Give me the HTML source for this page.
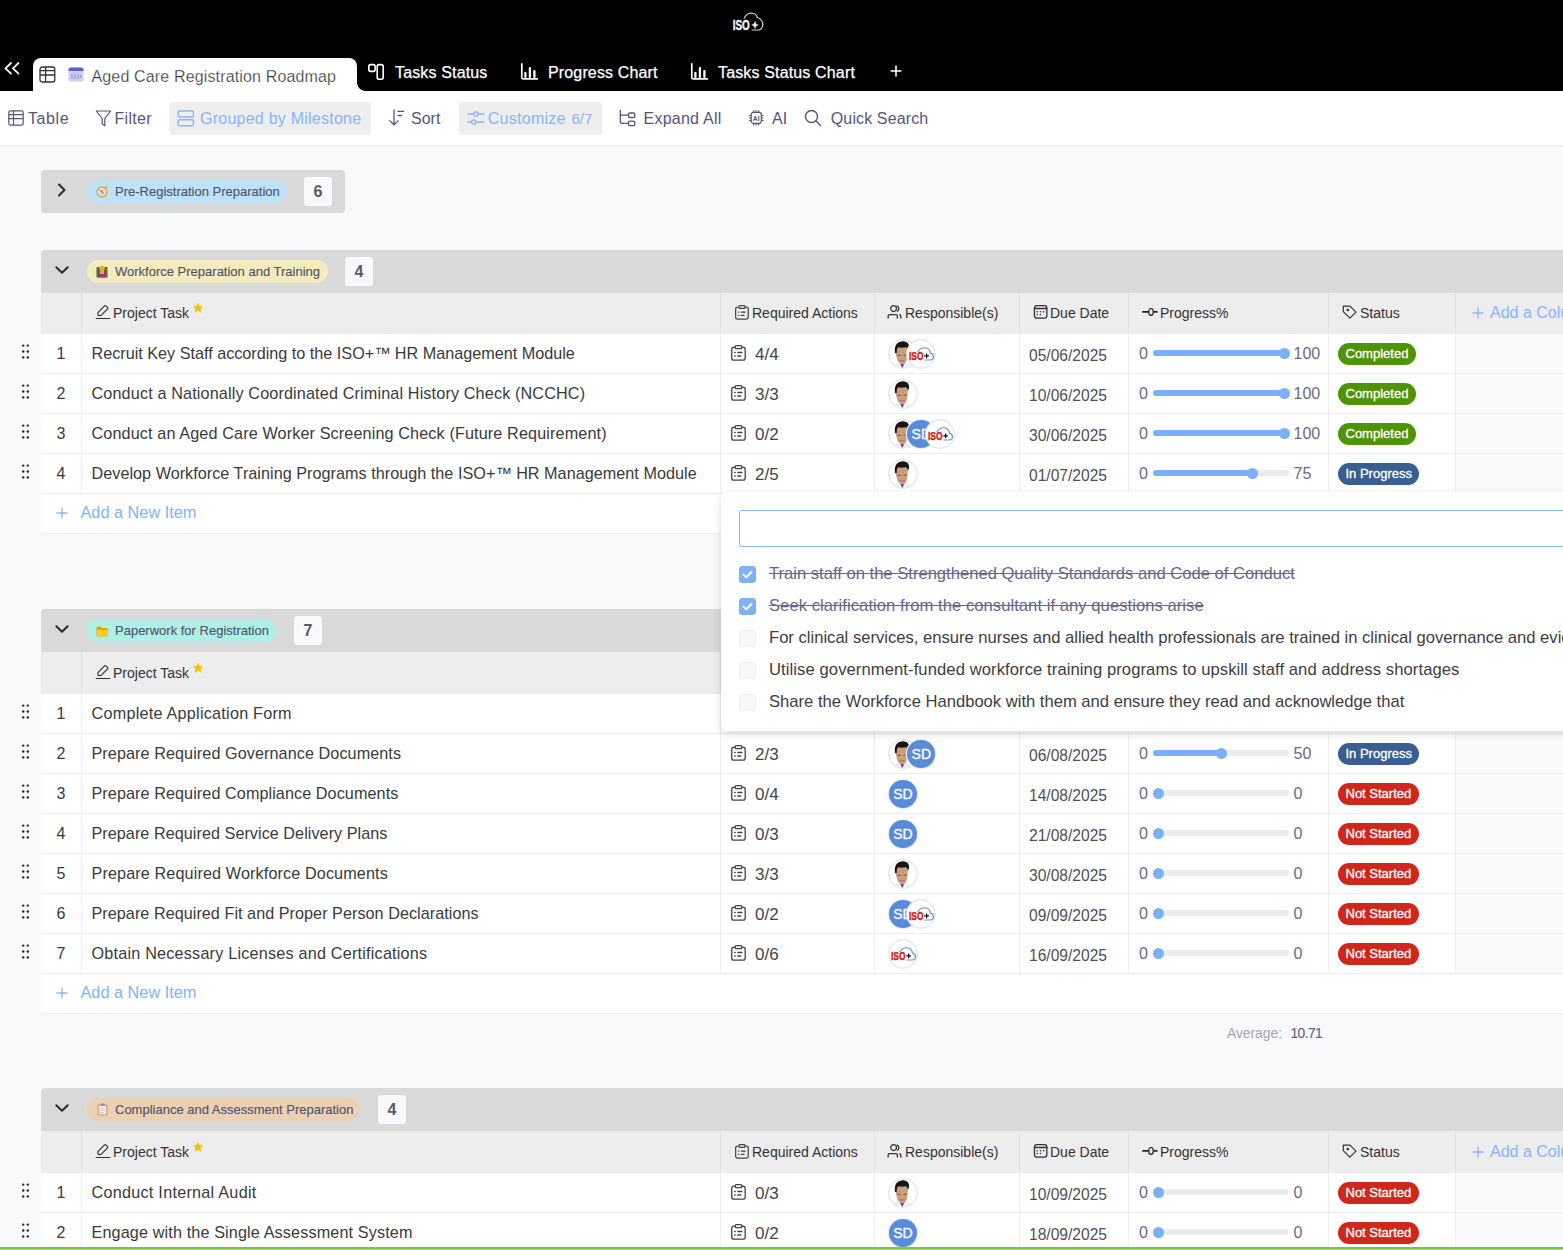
<!DOCTYPE html>
<html><head><meta charset="utf-8"><title>Aged Care Registration Roadmap</title>
<style>
*{box-sizing:border-box}
html,body{margin:0;padding:0}
body{width:1563px;height:1250px;overflow:hidden;position:relative;background:#f8f9fb;font-family:"Liberation Sans", sans-serif;color:#333}
div{position:absolute}
#topbar{left:0;top:0;width:1563px;height:91px;background:#000}
#acttab{left:33px;top:58px;width:324px;height:33px;background:#fff;border-radius:8px 8px 0 0}
#tabcorner{left:357px;top:83px;width:8px;height:8px;background:radial-gradient(circle at 100% 0,#000 7.5px,#fff 8px)}
.tabtxt{top:63px;font-size:16px;line-height:20px;color:#fff;white-space:nowrap;letter-spacing:0.15px;-webkit-text-stroke:0.25px #fff}
#toolbar{left:0;top:91px;width:1563px;height:55px;background:#fff;border-bottom:1px solid #eeeff2}
.tb{top:109px;font-size:16px;line-height:20px;color:#57557a;white-space:nowrap}
.tbbtn{top:102px;height:33px;background:#eeeeee;border-radius:4px}
.ghdr{left:41px;width:1522px;height:43px;background:#d9d9d9}
.pill{left:87px;height:23px;border-radius:12px;font-size:13px;line-height:23px;color:#545468;white-space:nowrap;-webkit-text-stroke:0.15px #545468}
.pill span{position:absolute;left:28px;top:0}
.count{width:28px;height:29px;background:#f9f9fb;border-radius:3px;font-size:16px;font-weight:700;line-height:29px;text-align:center;color:#555870}
.colhdr{left:41px;width:1522px;height:40px;background-color:#ededed;border-bottom:1px solid #ebebeb;
  background-image:linear-gradient(#dcdcdc,#dcdcdc),linear-gradient(#e0e0e0,#e0e0e0),linear-gradient(#e0e0e0,#e0e0e0),linear-gradient(#e0e0e0,#e0e0e0),linear-gradient(#e0e0e0,#e0e0e0),linear-gradient(#e0e0e0,#e0e0e0),linear-gradient(#e0e0e0,#e0e0e0);
  background-size:1px 100%,1px 100%,1px 100%,1px 100%,1px 100%,1px 100%,1px 100%;
  background-position:40px 0,679px 0,833px 0,978px 0,1087px 0,1287px 0,1414px 0;background-repeat:no-repeat}
.hl{font-size:14px;line-height:40px;color:#333;white-space:nowrap}
.addcol{left:1490px;font-size:16px;line-height:40px;color:#8ab4f8;white-space:nowrap}
.rowbg{left:41px;width:1522px;height:40px;background:#fff;border-bottom:1px solid #eeeeee;
  background-image:linear-gradient(#eee,#eee),linear-gradient(#eee,#eee),linear-gradient(#eee,#eee),linear-gradient(#eee,#eee),linear-gradient(#eee,#eee),linear-gradient(#eee,#eee),linear-gradient(#eee,#eee),linear-gradient(#f9fafb,#f9fafb);
  background-size:1px 100%,1px 100%,1px 100%,1px 100%,1px 100%,1px 100%,1px 100%,110px 100%;
  background-position:40px 0,679px 0,833px 0,978px 0,1087px 0,1287px 0,1414px 0,1415px 0;background-repeat:no-repeat}
.num{left:41px;width:40px;text-align:center;font-size:16px;line-height:39px;color:#3a3a3a}
.task{left:91.5px;font-size:16.2px;line-height:38px;color:#3a3a3a;white-space:nowrap}
.ra{left:755px;font-size:17px;line-height:41px;color:#444}
.date{left:1029px;font-size:15.6px;line-height:44px;color:#505050}
.p0{left:1139px;font-size:16px;line-height:40px;color:#6c6a82}
.pv{left:1293.5px;font-size:16px;line-height:40px;color:#6c6a82}
.track{left:1153px;width:136px;height:6px;border-radius:3px;background:#ececec}
.fill{left:1153px;height:6px;border-radius:3px;background:#79b0f7}
.thumb{width:11px;height:11px;border-radius:50%;background:#79b0f7}
.badge{left:1338px;height:22px;border-radius:11px;padding:0 7.5px;font-size:13px;font-weight:400;line-height:22px;color:#fff;white-space:nowrap;-webkit-text-stroke:0.3px #fff}
.addrow{left:41px;width:1522px;height:40px;background:#fff;border-bottom:1px solid #eeeeee;border-radius:0 0 0 4px}
.addrow .plus{position:absolute;left:14px;top:0;font-size:18px;line-height:38px;color:#8ab4f8}
.addrow .addtxt{position:absolute;left:39.5px;top:0;font-size:16.3px;line-height:37.5px;color:#82b3f7}
.avg{left:1227px;top:1025px;font-size:13.8px;line-height:18px;white-space:nowrap}
#popup{left:721px;top:492px;width:900px;height:239px;background:#fff;border-radius:6px;box-shadow:0 3px 8px rgba(0,0,0,0.15)}
#popinput{left:739px;top:510px;width:900px;height:37px;border:1px solid #8ab8f5;border-radius:3px;background:#fff}
.cb{left:739px;width:17px;height:17px;border-radius:3px;background:#f7f8fa;border:1px solid #eceef2}
.cb.on{background:#7cb2f8;border-color:#7cb2f8}
.cb svg{position:absolute;left:-1px;top:-1px}
.pit{left:769px;font-size:16.6px;line-height:20px;color:#3d3d3d;white-space:nowrap}
.pit.strike{color:#686686;text-decoration:line-through}
#greenline{left:0;top:1247px;width:1563px;height:2px;background:#86bf3a}
#bottomstrip{left:0;top:1249px;width:1563px;height:1px;background:#cdb9c5}
</style></head>
<body>

<div id="topbar"></div>
<svg style="position:absolute;left:731px;top:11px" width="34" height="22" viewBox="0 0 34 22"><text x="1.8" y="19" font-family="Liberation Sans" font-weight="700" font-size="14.5" fill="#f2f2f2" stroke="#f2f2f2" stroke-width="0.5" textLength="17" lengthAdjust="spacingAndGlyphs">ISO</text><path d="M13 7.5Q15.5 2 20.5 2Q25 2.2 26.3 6.5Q31.8 8.5 31.8 13.5Q31.5 19 26.5 19H20.5" fill="none" stroke="#d8d8d8" stroke-width="1.2"/><path d="M24 10.5Q24.3 13.7 27.2 14Q24.3 14.3 24 17.5Q23.7 14.3 20.8 14Q23.7 13.7 24 10.5Z" fill="#fff" stroke="#fff" stroke-width="0.6"/></svg>
<svg style="position:absolute;left:3px;top:61px" width="18" height="15" viewBox="0 0 18 15" fill="none" stroke="#fff" stroke-width="1.8" stroke-linecap="round" stroke-linejoin="round"><path d="M8 2L2.5 7.3L8 12.6M15.5 2L10 7.3L15.5 12.6"/></svg>
<div id="acttab"></div>
<div id="tabcorner"></div>
<svg style="position:absolute;left:39px;top:66px" width="17" height="17" viewBox="0 0 17 17" fill="none" stroke="#333" stroke-width="1.3"><rect x="1" y="1" width="14.8" height="15" rx="2.3"/><path d="M1 4.7H15.8M1 9H15.8M6.6 1V16"/></svg>
<svg style="position:absolute;left:68px;top:66px" width="16" height="16" viewBox="0 0 16 16"><rect x="0.5" y="1.5" width="15" height="14" rx="2.5" fill="#cfcdf0"/><path d="M0.5 4Q0.5 1.5 3 1.5H13Q15.5 1.5 15.5 4V5H0.5Z" fill="#5c5fd6"/><path d="M4 8V13M7 8V13M10 8V13" stroke="#8a8ad0" stroke-width="1"/><path d="M12 9L13 10.5L12 12" stroke="#5c7ce0" stroke-width="0.9" fill="none"/></svg>
<div class="tabtxt" style="left:91.5px;color:#333;top:66.5px">Aged Care Registration Roadmap</div>
<svg style="position:absolute;left:367px;top:63px" width="18" height="18" viewBox="0 0 18 18" fill="none" stroke="#fff" stroke-width="1.6"><rect x="1.8" y="1.6" width="6.3" height="6.8" rx="1.8"/><rect x="10.2" y="1.6" width="6" height="14.6" rx="2"/></svg>
<div class="tabtxt" style="left:395px">Tasks Status</div>
<svg style="position:absolute;left:520px;top:63px" width="19" height="18" viewBox="0 0 19 18" fill="none" stroke="#fff" stroke-linecap="round"><path d="M1.8 0.9V14.4Q1.8 15.9 3.3 15.9H17.3" stroke-width="1.7"/><path d="M5.4 9.8V13.9M9.9 5.2V13.9M14.4 8.1V13.9" stroke-width="2.3"/></svg>
<div class="tabtxt" style="left:548px">Progress Chart</div>
<svg style="position:absolute;left:690px;top:63px" width="19" height="18" viewBox="0 0 19 18" fill="none" stroke="#fff" stroke-linecap="round"><path d="M1.8 0.9V14.4Q1.8 15.9 3.3 15.9H17.3" stroke-width="1.7"/><path d="M5.4 9.8V13.9M9.9 5.2V13.9M14.4 8.1V13.9" stroke-width="2.3"/></svg>
<div class="tabtxt" style="left:718px">Tasks Status Chart</div>
<svg style="position:absolute;left:889px;top:64px" width="14" height="14" viewBox="0 0 14 14" stroke="#fff" stroke-width="1.6"><path d="M7 1.5V12.5M1.5 7H12.5"/></svg>

<div id="toolbar"></div>
<svg style="position:absolute;left:8px;top:110px" width="16" height="16" viewBox="0 0 16 16" fill="none" stroke="#57557a" stroke-width="1.2"><rect x="0.8" y="0.8" width="14.4" height="14.4" rx="1.8"/><path d="M0.8 4.6H15.2M0.8 8.6H15.2M5.5 0.8V15.2"/></svg>
<div class="tb" style="left:28px;letter-spacing:0.6px">Table</div>
<svg style="position:absolute;left:94.5px;top:110px" width="17" height="17" viewBox="0 0 16 17" fill="none" stroke="#57557a" stroke-width="1.2" stroke-linejoin="round"><path d="M0.8 1H15.2L9.3 8.5V15.8L6.7 13.8V8.5Z"/></svg>
<div class="tb" style="left:114.4px;letter-spacing:0.35px">Filter</div>
<div class="tbbtn" style="left:169px;width:202px"></div>
<svg style="position:absolute;left:177px;top:110px" width="18" height="17" viewBox="0 0 18 17" fill="none" stroke="#8ab4f8" stroke-width="1.4"><rect x="1" y="1" width="15.5" height="6" rx="1.8"/><rect x="1" y="9.8" width="15.5" height="6" rx="1.8"/></svg>
<div class="tb" style="left:200px;color:#8ab4f8;letter-spacing:0.24px">Grouped by Milestone</div>
<svg style="position:absolute;left:388px;top:109px" width="17" height="18" viewBox="0 0 17 18" fill="none" stroke="#57557a" stroke-width="1.3" stroke-linecap="round" stroke-linejoin="round"><path d="M6 1V15.6M1.7 11.6L6 15.8L10.3 11.6M10 2.4H15.6M10 6.5H13.4"/></svg>
<div class="tb" style="left:411px">Sort</div>
<div class="tbbtn" style="left:459px;width:143px"></div>
<svg style="position:absolute;left:467px;top:109px" width="18" height="18" viewBox="0 0 18 18" fill="none" stroke="#8ab4f8" stroke-width="1.3" stroke-linecap="round"><path d="M1 5H6.5M11 5H17M1 13H4.5M9 13H17"/><circle cx="8.8" cy="5" r="2.2"/><circle cx="6.8" cy="13" r="2.2"/></svg>
<div class="tb" style="left:487.7px;color:#8ab4f8;letter-spacing:0.28px">Customize</div>
<div class="tb" style="left:571.5px;color:#8ab4f8;font-size:15px;top:108.5px">6/7</div>
<svg style="position:absolute;left:618px;top:109px" width="18" height="18" viewBox="0 0 18 18" fill="none" stroke="#57557a" stroke-width="1.3"><path d="M2.3 1V12.3Q2.3 14.4 4.4 14.4H10.5M2.3 6.2H10.5"/><rect x="10.5" y="4" width="6.3" height="4.5" rx="1.3"/><rect x="10.5" y="12.2" width="6.3" height="4.5" rx="1.3"/></svg>
<div class="tb" style="left:643.5px;letter-spacing:0.25px">Expand All</div>
<svg style="position:absolute;left:747px;top:109px" width="18" height="18" viewBox="0 0 18 18" fill="none" stroke="#57557a" stroke-width="1.2"><rect x="4.2" y="3.3" width="10.1" height="11" rx="2.2"/><path d="M6.7 1.2V3.3M9.2 1.2V3.3M11.7 1.2V3.3M6.7 14.3V16.4M9.2 14.3V16.4M11.7 14.3V16.4M2 6.5H4.2M2 9H4.2M2 11.5H4.2M14.3 6.5H16.5M14.3 9H16.5M14.3 11.5H16.5"/><text x="9.25" y="11.8" text-anchor="middle" font-family="Liberation Sans" font-size="6.8" fill="#57557a" stroke="none" font-weight="700">AI</text></svg>
<div class="tb" style="left:772px">AI</div>
<svg style="position:absolute;left:804px;top:109px" width="18" height="18" viewBox="0 0 18 18" fill="none" stroke="#57557a" stroke-width="1.4" stroke-linecap="round"><circle cx="7.5" cy="7.5" r="6"/><path d="M12 12L16.5 16.5"/></svg>
<div class="tb" style="left:830.8px;letter-spacing:0.12px">Quick Search</div>
<div class="ghdr" style="top:170px;width:304px;border-radius:4px"></div><svg style="position:absolute;left:56px;top:182px" width="12" height="16" viewBox="0 0 12 16" fill="none" stroke="#2a2a2a" stroke-width="2" stroke-linecap="round" stroke-linejoin="round"><path d="M3 2.5L8.5 8L3 13.5"/></svg><div class="pill" style="top:180px;width:199px;background:#bde3fb"><svg width="13" height="13" viewBox="0 0 13 13" style="position:absolute;left:9px;top:5px"><circle cx="6" cy="7" r="5" fill="#e6d6ee" stroke="#dcae2a" stroke-width="1.4"/><path d="M3.8 4.8L6.5 6.6L8.2 9.2L5.5 7.4Z" fill="#8a6a9a"/><path d="M3.8 4.8L6.5 6.6L5.5 7.4Z" fill="#e04a8a"/><circle cx="10.3" cy="2.2" r="1.3" fill="#e8b420"/></svg><span>Pre-Registration Preparation</span></div><div class="count" style="top:177px;left:304px">6</div><div class="ghdr" style="top:250px;border-radius:4px 0 0 0"></div><svg style="position:absolute;left:54px;top:263.5px" width="16" height="12" viewBox="0 0 16 12" fill="none" stroke="#2a2a2a" stroke-width="2" stroke-linecap="round" stroke-linejoin="round"><path d="M2.3 3.2L8 8.8L13.7 3.2"/></svg><div class="pill" style="top:260px;width:241px;background:#f4ecbc"><svg width="12" height="13" viewBox="0 0 12 13" style="position:absolute;left:9px;top:5px"><rect x="0.5" y="2" width="11" height="10.5" fill="#3c7a3a"/><rect x="3" y="1" width="6" height="4" rx="2" fill="#e6b020"/><rect x="2.5" y="5" width="7" height="7.5" fill="#b02a8a"/><rect x="4" y="5" width="4" height="4" fill="#e6b020"/></svg><span>Workforce Preparation and Training</span></div><div class="count" style="top:257px;left:345px">4</div><div class="colhdr" style="top:293px;height:41px"></div><svg style="position:absolute;left:95px;top:304.0px" width="16" height="16" viewBox="0 0 16 16" fill="none" stroke="#333" stroke-width="1.2" stroke-linecap="round" stroke-linejoin="round"><path d="M3.2 11.4L2.9 9.2Q2.8 8.6 3.3 8.1L9.6 1.9Q10.2 1.3 10.8 1.9L12.6 3.7Q13.2 4.3 12.6 4.9L6.3 11.1Q5.8 11.6 5.2 11.6Z"/><path d="M1.3 14.5H14.8"/></svg><div class="hl" style="top:293.0px;left:113px">Project Task</div><svg style="position:absolute;left:193px;top:303.0px" width="10" height="10" viewBox="0 0 10 10"><path d="M5 0.3L6.4 3.3L9.7 3.6L7.2 5.8L7.9 9.2L5 7.5L2.1 9.2L2.8 5.8L0.3 3.6L3.6 3.3Z" fill="#f2c200" stroke="#f2c200" stroke-width="0.6" stroke-linejoin="round"/></svg><svg style="position:absolute;left:735px;top:305.0px" width="14" height="15" viewBox="0 0 15 16" fill="none" stroke="#444" stroke-width="1.3" stroke-linecap="round"><path d="M4.2 2.1H3Q0.7 2.1 0.7 4.4V12.9Q0.7 15.2 3 15.2H11.9Q14.2 15.2 14.2 12.9V4.4Q14.2 2.1 11.9 2.1H10.8"/><rect x="4.2" y="0.65" width="6.6" height="3" rx="1"/><path d="M3.7 7.5H4.2M6.8 7.5H10.9M3.7 11H4.2M6.8 11H9.7"/></svg><div class="hl" style="top:293.0px;left:752px">Required Actions</div><svg style="position:absolute;left:887px;top:305.0px" width="16" height="16" viewBox="0 0 16 16" fill="none" stroke="#333" stroke-width="1.3"><circle cx="6.6" cy="3.6" r="2.9"/><path d="M9.7 0.8A2.9 2.9 0 0 1 9.7 6.4"/><path d="M1.15 13.6V11Q1.15 9.6 2.6 9.6H8.9Q10.35 9.6 10.35 11V13.6"/><path d="M12.2 9.7Q13.85 10 13.85 11.5V13.6"/></svg><div class="hl" style="top:293.0px;left:905px">Responsible(s)</div><svg style="position:absolute;left:1032.5px;top:304.0px" width="16" height="16" viewBox="0 0 16 16" fill="none" stroke="#333" stroke-width="1.3" stroke-linecap="round"><rect x="1.45" y="1.65" width="12.4" height="12.5" rx="2.3"/><path d="M1.45 4.5H13.85"/><path d="M4.1 7.7H4.2M7.4 7.7H7.5M10.5 7.7H10.6M4.1 10.5H4.2M7.4 10.5H7.5" stroke-width="1.5"/></svg><div class="hl" style="top:293.0px;left:1050px">Due Date</div><svg style="position:absolute;left:1142px;top:305.0px" width="16" height="16" viewBox="0 0 16 16" fill="none" stroke="#222"><path d="M1 6.9H14.8" stroke-width="1.8" stroke-linecap="round"/><ellipse cx="9" cy="6.9" rx="2.3" ry="3.4" fill="#ededed" stroke-width="1.2"/></svg><div class="hl" style="top:293.0px;left:1160px">Progress%</div><svg style="position:absolute;left:1342px;top:305.0px" width="16" height="16" viewBox="0 0 16 16" fill="none" stroke="#333" stroke-width="1.2" stroke-linejoin="round"><path d="M1.3 1.1H7.9L14 7.1L7.9 13.2L1.3 6.6Z"/><circle cx="5.8" cy="5" r="0.7" fill="#333"/></svg><div class="hl" style="top:293.0px;left:1360px">Status</div><svg style="position:absolute;left:1472px;top:307.0px" width="12" height="12" viewBox="0 0 12 12" stroke="#8ab4f8" stroke-width="1.3"><path d="M6 0.5V11.5M0.5 6H11.5"/></svg><div class="addcol" style="top:293.0px">Add a Column</div><div class="rowbg" style="top:334px"></div><div class="num" style="top:334px">1</div><div class="task" style="top:334px;letter-spacing:0px">Recruit Key Staff according to the ISO+™ HR Management Module</div><svg style="position:absolute;left:731px;top:344.5px" width="15" height="16" viewBox="0 0 15 16" fill="none" stroke="#444" stroke-width="1.3" stroke-linecap="round"><path d="M4.2 2.1H3Q0.7 2.1 0.7 4.4V12.9Q0.7 15.2 3 15.2H11.9Q14.2 15.2 14.2 12.9V4.4Q14.2 2.1 11.9 2.1H10.8"/><rect x="4.2" y="0.65" width="6.6" height="3" rx="1"/><path d="M3.7 7.5H4.2M6.8 7.5H10.9M3.7 11H4.2M6.8 11H9.7"/></svg><div class="ra" style="top:334px">4/4</div><svg style="position:absolute;left:888.0px;top:339px" width="30" height="30" viewBox="0 0 30 30"><defs><clipPath id="cpm889.0_340"><circle cx="15" cy="15" r="14"/></clipPath></defs><circle cx="15" cy="15" r="14.2" fill="#fff" stroke="#e8e8e8" stroke-width="1.5"/><g clip-path="url(#cpm889.0_340)"><path d="M5 30Q6 24.5 14 23.5Q22 24.5 23 30Z" fill="#eef0fa" stroke="#c8cce8" stroke-width="0.6"/><path d="M12.3 25L14.2 29L16.2 25Z" fill="#4a3aa0"/><path d="M8 8Q7.6 19 10 22.5Q12 25.5 14.2 25.5Q16.8 25.5 18.5 22Q20 18.5 19.8 8Z" fill="#c99f7c"/><path d="M9.5 16.5Q11 15.5 12.5 16.5M15.5 16.5Q17 15.5 18.5 16.5" stroke="#5a3a2a" stroke-width="0.8" fill="none"/><path d="M11.5 21.5Q14 22.8 16.5 21.5" stroke="#8a5a40" stroke-width="0.7" fill="none"/><path d="M7 14Q6 8.5 8.5 5Q11 2 15.5 2.3Q20 2.6 21 6.5Q21.5 9 20 12Q19.5 9 18 8.3Q13 9 10 8.2Q8.6 10 8.6 14.5Z" fill="#161616"/></g></svg><svg style="position:absolute;left:906.3px;top:339px" width="30" height="30" viewBox="0 0 30 30"><circle cx="15" cy="15" r="14.2" fill="#fff" stroke="#e8e8e8" stroke-width="1.5"/><path d="M11.5 13.3Q14 8.6 18.8 8.7Q23.4 9 24.6 14Q27.6 15.3 27.5 18Q27.2 21 24.5 21H18.5" fill="none" stroke="#5b93e0" stroke-width="1.1"/><text x="3" y="21.4" font-family="Liberation Sans" font-weight="700" font-size="11" fill="#d01c1c" stroke="#d01c1c" stroke-width="0.45" textLength="14.5" lengthAdjust="spacingAndGlyphs">ISO</text><path d="M18.3 16.9H23M20.65 14.5V19.3" stroke="#111" stroke-width="1.3"/></svg><div class="date" style="top:334px">05/06/2025</div><div class="p0" style="top:334px">0</div><div class="track" style="top:350px"></div><div class="fill" style="top:350px;width:131.0px"></div><div class="thumb" style="top:347.5px;left:1278.5px"></div><div class="pv" style="top:334px">100</div><div class="badge" style="top:343px;background:#4f9406">Completed</div><div class="rowbg" style="top:374px"></div><div class="num" style="top:374px">2</div><div class="task" style="top:374px;letter-spacing:0.14px">Conduct a Nationally Coordinated Criminal History Check (NCCHC)</div><svg style="position:absolute;left:731px;top:384.5px" width="15" height="16" viewBox="0 0 15 16" fill="none" stroke="#444" stroke-width="1.3" stroke-linecap="round"><path d="M4.2 2.1H3Q0.7 2.1 0.7 4.4V12.9Q0.7 15.2 3 15.2H11.9Q14.2 15.2 14.2 12.9V4.4Q14.2 2.1 11.9 2.1H10.8"/><rect x="4.2" y="0.65" width="6.6" height="3" rx="1"/><path d="M3.7 7.5H4.2M6.8 7.5H10.9M3.7 11H4.2M6.8 11H9.7"/></svg><div class="ra" style="top:374px">3/3</div><svg style="position:absolute;left:888.0px;top:379px" width="30" height="30" viewBox="0 0 30 30"><defs><clipPath id="cpm889.0_380"><circle cx="15" cy="15" r="14"/></clipPath></defs><circle cx="15" cy="15" r="14.2" fill="#fff" stroke="#e8e8e8" stroke-width="1.5"/><g clip-path="url(#cpm889.0_380)"><path d="M5 30Q6 24.5 14 23.5Q22 24.5 23 30Z" fill="#eef0fa" stroke="#c8cce8" stroke-width="0.6"/><path d="M12.3 25L14.2 29L16.2 25Z" fill="#4a3aa0"/><path d="M8 8Q7.6 19 10 22.5Q12 25.5 14.2 25.5Q16.8 25.5 18.5 22Q20 18.5 19.8 8Z" fill="#c99f7c"/><path d="M9.5 16.5Q11 15.5 12.5 16.5M15.5 16.5Q17 15.5 18.5 16.5" stroke="#5a3a2a" stroke-width="0.8" fill="none"/><path d="M11.5 21.5Q14 22.8 16.5 21.5" stroke="#8a5a40" stroke-width="0.7" fill="none"/><path d="M7 14Q6 8.5 8.5 5Q11 2 15.5 2.3Q20 2.6 21 6.5Q21.5 9 20 12Q19.5 9 18 8.3Q13 9 10 8.2Q8.6 10 8.6 14.5Z" fill="#161616"/></g></svg><div class="date" style="top:374px">10/06/2025</div><div class="p0" style="top:374px">0</div><div class="track" style="top:390px"></div><div class="fill" style="top:390px;width:131.0px"></div><div class="thumb" style="top:387.5px;left:1278.5px"></div><div class="pv" style="top:374px">100</div><div class="badge" style="top:383px;background:#4f9406">Completed</div><div class="rowbg" style="top:414px"></div><div class="num" style="top:414px">3</div><div class="task" style="top:414px;letter-spacing:0.125px">Conduct an Aged Care Worker Screening Check (Future Requirement)</div><svg style="position:absolute;left:731px;top:424.5px" width="15" height="16" viewBox="0 0 15 16" fill="none" stroke="#444" stroke-width="1.3" stroke-linecap="round"><path d="M4.2 2.1H3Q0.7 2.1 0.7 4.4V12.9Q0.7 15.2 3 15.2H11.9Q14.2 15.2 14.2 12.9V4.4Q14.2 2.1 11.9 2.1H10.8"/><rect x="4.2" y="0.65" width="6.6" height="3" rx="1"/><path d="M3.7 7.5H4.2M6.8 7.5H10.9M3.7 11H4.2M6.8 11H9.7"/></svg><div class="ra" style="top:414px">0/2</div><svg style="position:absolute;left:888.0px;top:419px" width="30" height="30" viewBox="0 0 30 30"><defs><clipPath id="cpm889.0_420"><circle cx="15" cy="15" r="14"/></clipPath></defs><circle cx="15" cy="15" r="14.2" fill="#fff" stroke="#e8e8e8" stroke-width="1.5"/><g clip-path="url(#cpm889.0_420)"><path d="M5 30Q6 24.5 14 23.5Q22 24.5 23 30Z" fill="#eef0fa" stroke="#c8cce8" stroke-width="0.6"/><path d="M12.3 25L14.2 29L16.2 25Z" fill="#4a3aa0"/><path d="M8 8Q7.6 19 10 22.5Q12 25.5 14.2 25.5Q16.8 25.5 18.5 22Q20 18.5 19.8 8Z" fill="#c99f7c"/><path d="M9.5 16.5Q11 15.5 12.5 16.5M15.5 16.5Q17 15.5 18.5 16.5" stroke="#5a3a2a" stroke-width="0.8" fill="none"/><path d="M11.5 21.5Q14 22.8 16.5 21.5" stroke="#8a5a40" stroke-width="0.7" fill="none"/><path d="M7 14Q6 8.5 8.5 5Q11 2 15.5 2.3Q20 2.6 21 6.5Q21.5 9 20 12Q19.5 9 18 8.3Q13 9 10 8.2Q8.6 10 8.6 14.5Z" fill="#161616"/></g></svg><div style="position:absolute;left:907.3px;top:420px;width:28px;height:28px;border-radius:50%;background:#598bdb;box-shadow:0 0 0 1.3px #ececec;color:#fff;font-size:14px;font-weight:400;line-height:28px;text-align:center;-webkit-text-stroke:0.3px #fff">SD</div><svg style="position:absolute;left:924.6px;top:419px" width="30" height="30" viewBox="0 0 30 30"><circle cx="15" cy="15" r="14.2" fill="#fff" stroke="#e8e8e8" stroke-width="1.5"/><path d="M11.5 13.3Q14 8.6 18.8 8.7Q23.4 9 24.6 14Q27.6 15.3 27.5 18Q27.2 21 24.5 21H18.5" fill="none" stroke="#5b93e0" stroke-width="1.1"/><text x="3" y="21.4" font-family="Liberation Sans" font-weight="700" font-size="11" fill="#d01c1c" stroke="#d01c1c" stroke-width="0.45" textLength="14.5" lengthAdjust="spacingAndGlyphs">ISO</text><path d="M18.3 16.9H23M20.65 14.5V19.3" stroke="#111" stroke-width="1.3"/></svg><div class="date" style="top:414px">30/06/2025</div><div class="p0" style="top:414px">0</div><div class="track" style="top:430px"></div><div class="fill" style="top:430px;width:131.0px"></div><div class="thumb" style="top:427.5px;left:1278.5px"></div><div class="pv" style="top:414px">100</div><div class="badge" style="top:423px;background:#4f9406">Completed</div><div class="rowbg" style="top:454px"></div><div class="num" style="top:454px">4</div><div class="task" style="top:454px;letter-spacing:0.03px">Develop Workforce Training Programs through the ISO+™ HR Management Module</div><svg style="position:absolute;left:731px;top:464.5px" width="15" height="16" viewBox="0 0 15 16" fill="none" stroke="#444" stroke-width="1.3" stroke-linecap="round"><path d="M4.2 2.1H3Q0.7 2.1 0.7 4.4V12.9Q0.7 15.2 3 15.2H11.9Q14.2 15.2 14.2 12.9V4.4Q14.2 2.1 11.9 2.1H10.8"/><rect x="4.2" y="0.65" width="6.6" height="3" rx="1"/><path d="M3.7 7.5H4.2M6.8 7.5H10.9M3.7 11H4.2M6.8 11H9.7"/></svg><div class="ra" style="top:454px">2/5</div><svg style="position:absolute;left:888.0px;top:459px" width="30" height="30" viewBox="0 0 30 30"><defs><clipPath id="cpm889.0_460"><circle cx="15" cy="15" r="14"/></clipPath></defs><circle cx="15" cy="15" r="14.2" fill="#fff" stroke="#e8e8e8" stroke-width="1.5"/><g clip-path="url(#cpm889.0_460)"><path d="M5 30Q6 24.5 14 23.5Q22 24.5 23 30Z" fill="#eef0fa" stroke="#c8cce8" stroke-width="0.6"/><path d="M12.3 25L14.2 29L16.2 25Z" fill="#4a3aa0"/><path d="M8 8Q7.6 19 10 22.5Q12 25.5 14.2 25.5Q16.8 25.5 18.5 22Q20 18.5 19.8 8Z" fill="#c99f7c"/><path d="M9.5 16.5Q11 15.5 12.5 16.5M15.5 16.5Q17 15.5 18.5 16.5" stroke="#5a3a2a" stroke-width="0.8" fill="none"/><path d="M11.5 21.5Q14 22.8 16.5 21.5" stroke="#8a5a40" stroke-width="0.7" fill="none"/><path d="M7 14Q6 8.5 8.5 5Q11 2 15.5 2.3Q20 2.6 21 6.5Q21.5 9 20 12Q19.5 9 18 8.3Q13 9 10 8.2Q8.6 10 8.6 14.5Z" fill="#161616"/></g></svg><div class="date" style="top:454px">01/07/2025</div><div class="p0" style="top:454px">0</div><div class="track" style="top:470px"></div><div class="fill" style="top:470px;width:99.5px"></div><div class="thumb" style="top:467.5px;left:1247.0px"></div><div class="pv" style="top:454px">75</div><div class="badge" style="top:463px;background:#385f8f">In Progress</div><div class="addrow" style="top:494px"><svg style="position:absolute;left:15px;top:12.5px" width="12" height="12" viewBox="0 0 12 12" stroke="#8ab4f8" stroke-width="1.3"><path d="M6 0.5V11.5M0.5 6H11.5"/></svg><span class="addtxt">Add a New Item</span></div><div class="ghdr" style="top:609px;border-radius:4px 0 0 0"></div><svg style="position:absolute;left:54px;top:622.5px" width="16" height="12" viewBox="0 0 16 12" fill="none" stroke="#2a2a2a" stroke-width="2" stroke-linecap="round" stroke-linejoin="round"><path d="M2.3 3.2L8 8.8L13.7 3.2"/></svg><div class="pill" style="top:619px;width:189px;background:#aef0e8"><svg width="13" height="11" viewBox="0 0 13 11" style="position:absolute;left:9px;top:7px"><path d="M0.5 1.5Q0.5 0.5 1.5 0.5H4.5L6 2H11Q12 2 12 3V9.5Q12 10.5 11 10.5H1.5Q0.5 10.5 0.5 9.5Z" fill="#e5a50a"/><path d="M1.5 4H12.5L11.5 10.5H0.5Z" fill="#f8cd2a"/></svg><span>Paperwork for Registration</span></div><div class="count" style="top:616px;left:294px">7</div><div class="colhdr" style="top:652px;height:42px"></div><svg style="position:absolute;left:95px;top:663.5px" width="16" height="16" viewBox="0 0 16 16" fill="none" stroke="#333" stroke-width="1.2" stroke-linecap="round" stroke-linejoin="round"><path d="M3.2 11.4L2.9 9.2Q2.8 8.6 3.3 8.1L9.6 1.9Q10.2 1.3 10.8 1.9L12.6 3.7Q13.2 4.3 12.6 4.9L6.3 11.1Q5.8 11.6 5.2 11.6Z"/><path d="M1.3 14.5H14.8"/></svg><div class="hl" style="top:652.5px;left:113px">Project Task</div><svg style="position:absolute;left:193px;top:662.5px" width="10" height="10" viewBox="0 0 10 10"><path d="M5 0.3L6.4 3.3L9.7 3.6L7.2 5.8L7.9 9.2L5 7.5L2.1 9.2L2.8 5.8L0.3 3.6L3.6 3.3Z" fill="#f2c200" stroke="#f2c200" stroke-width="0.6" stroke-linejoin="round"/></svg><svg style="position:absolute;left:735px;top:664.5px" width="14" height="15" viewBox="0 0 15 16" fill="none" stroke="#444" stroke-width="1.3" stroke-linecap="round"><path d="M4.2 2.1H3Q0.7 2.1 0.7 4.4V12.9Q0.7 15.2 3 15.2H11.9Q14.2 15.2 14.2 12.9V4.4Q14.2 2.1 11.9 2.1H10.8"/><rect x="4.2" y="0.65" width="6.6" height="3" rx="1"/><path d="M3.7 7.5H4.2M6.8 7.5H10.9M3.7 11H4.2M6.8 11H9.7"/></svg><div class="hl" style="top:652.5px;left:752px">Required Actions</div><svg style="position:absolute;left:887px;top:664.5px" width="16" height="16" viewBox="0 0 16 16" fill="none" stroke="#333" stroke-width="1.3"><circle cx="6.6" cy="3.6" r="2.9"/><path d="M9.7 0.8A2.9 2.9 0 0 1 9.7 6.4"/><path d="M1.15 13.6V11Q1.15 9.6 2.6 9.6H8.9Q10.35 9.6 10.35 11V13.6"/><path d="M12.2 9.7Q13.85 10 13.85 11.5V13.6"/></svg><div class="hl" style="top:652.5px;left:905px">Responsible(s)</div><svg style="position:absolute;left:1032.5px;top:663.5px" width="16" height="16" viewBox="0 0 16 16" fill="none" stroke="#333" stroke-width="1.3" stroke-linecap="round"><rect x="1.45" y="1.65" width="12.4" height="12.5" rx="2.3"/><path d="M1.45 4.5H13.85"/><path d="M4.1 7.7H4.2M7.4 7.7H7.5M10.5 7.7H10.6M4.1 10.5H4.2M7.4 10.5H7.5" stroke-width="1.5"/></svg><div class="hl" style="top:652.5px;left:1050px">Due Date</div><svg style="position:absolute;left:1142px;top:664.5px" width="16" height="16" viewBox="0 0 16 16" fill="none" stroke="#222"><path d="M1 6.9H14.8" stroke-width="1.8" stroke-linecap="round"/><ellipse cx="9" cy="6.9" rx="2.3" ry="3.4" fill="#ededed" stroke-width="1.2"/></svg><div class="hl" style="top:652.5px;left:1160px">Progress%</div><svg style="position:absolute;left:1342px;top:664.5px" width="16" height="16" viewBox="0 0 16 16" fill="none" stroke="#333" stroke-width="1.2" stroke-linejoin="round"><path d="M1.3 1.1H7.9L14 7.1L7.9 13.2L1.3 6.6Z"/><circle cx="5.8" cy="5" r="0.7" fill="#333"/></svg><div class="hl" style="top:652.5px;left:1360px">Status</div><svg style="position:absolute;left:1472px;top:666.5px" width="12" height="12" viewBox="0 0 12 12" stroke="#8ab4f8" stroke-width="1.3"><path d="M6 0.5V11.5M0.5 6H11.5"/></svg><div class="addcol" style="top:652.5px">Add a Column</div><div class="rowbg" style="top:694px"></div><div class="num" style="top:694px">1</div><div class="task" style="top:694px;letter-spacing:0.24px">Complete Application Form</div><svg style="position:absolute;left:731px;top:704.5px" width="15" height="16" viewBox="0 0 15 16" fill="none" stroke="#444" stroke-width="1.3" stroke-linecap="round"><path d="M4.2 2.1H3Q0.7 2.1 0.7 4.4V12.9Q0.7 15.2 3 15.2H11.9Q14.2 15.2 14.2 12.9V4.4Q14.2 2.1 11.9 2.1H10.8"/><rect x="4.2" y="0.65" width="6.6" height="3" rx="1"/><path d="M3.7 7.5H4.2M6.8 7.5H10.9M3.7 11H4.2M6.8 11H9.7"/></svg><div class="ra" style="top:694px">0/1</div><svg style="position:absolute;left:888.0px;top:699px" width="30" height="30" viewBox="0 0 30 30"><defs><clipPath id="cpm889.0_700"><circle cx="15" cy="15" r="14"/></clipPath></defs><circle cx="15" cy="15" r="14.2" fill="#fff" stroke="#e8e8e8" stroke-width="1.5"/><g clip-path="url(#cpm889.0_700)"><path d="M5 30Q6 24.5 14 23.5Q22 24.5 23 30Z" fill="#eef0fa" stroke="#c8cce8" stroke-width="0.6"/><path d="M12.3 25L14.2 29L16.2 25Z" fill="#4a3aa0"/><path d="M8 8Q7.6 19 10 22.5Q12 25.5 14.2 25.5Q16.8 25.5 18.5 22Q20 18.5 19.8 8Z" fill="#c99f7c"/><path d="M9.5 16.5Q11 15.5 12.5 16.5M15.5 16.5Q17 15.5 18.5 16.5" stroke="#5a3a2a" stroke-width="0.8" fill="none"/><path d="M11.5 21.5Q14 22.8 16.5 21.5" stroke="#8a5a40" stroke-width="0.7" fill="none"/><path d="M7 14Q6 8.5 8.5 5Q11 2 15.5 2.3Q20 2.6 21 6.5Q21.5 9 20 12Q19.5 9 18 8.3Q13 9 10 8.2Q8.6 10 8.6 14.5Z" fill="#161616"/></g></svg><div class="date" style="top:694px">01/08/2025</div><div class="p0" style="top:694px">0</div><div class="track" style="top:710px"></div><div class="thumb" style="top:707.5px;left:1152.5px"></div><div class="pv" style="top:694px">0</div><div class="badge" style="top:703px;background:#d0271d">Not Started</div><div class="rowbg" style="top:734px"></div><div class="num" style="top:734px">2</div><div class="task" style="top:734px;letter-spacing:0.075px">Prepare Required Governance Documents</div><svg style="position:absolute;left:731px;top:744.5px" width="15" height="16" viewBox="0 0 15 16" fill="none" stroke="#444" stroke-width="1.3" stroke-linecap="round"><path d="M4.2 2.1H3Q0.7 2.1 0.7 4.4V12.9Q0.7 15.2 3 15.2H11.9Q14.2 15.2 14.2 12.9V4.4Q14.2 2.1 11.9 2.1H10.8"/><rect x="4.2" y="0.65" width="6.6" height="3" rx="1"/><path d="M3.7 7.5H4.2M6.8 7.5H10.9M3.7 11H4.2M6.8 11H9.7"/></svg><div class="ra" style="top:734px">2/3</div><svg style="position:absolute;left:888.0px;top:739px" width="30" height="30" viewBox="0 0 30 30"><defs><clipPath id="cpm889.0_740"><circle cx="15" cy="15" r="14"/></clipPath></defs><circle cx="15" cy="15" r="14.2" fill="#fff" stroke="#e8e8e8" stroke-width="1.5"/><g clip-path="url(#cpm889.0_740)"><path d="M5 30Q6 24.5 14 23.5Q22 24.5 23 30Z" fill="#eef0fa" stroke="#c8cce8" stroke-width="0.6"/><path d="M12.3 25L14.2 29L16.2 25Z" fill="#4a3aa0"/><path d="M8 8Q7.6 19 10 22.5Q12 25.5 14.2 25.5Q16.8 25.5 18.5 22Q20 18.5 19.8 8Z" fill="#c99f7c"/><path d="M9.5 16.5Q11 15.5 12.5 16.5M15.5 16.5Q17 15.5 18.5 16.5" stroke="#5a3a2a" stroke-width="0.8" fill="none"/><path d="M11.5 21.5Q14 22.8 16.5 21.5" stroke="#8a5a40" stroke-width="0.7" fill="none"/><path d="M7 14Q6 8.5 8.5 5Q11 2 15.5 2.3Q20 2.6 21 6.5Q21.5 9 20 12Q19.5 9 18 8.3Q13 9 10 8.2Q8.6 10 8.6 14.5Z" fill="#161616"/></g></svg><div style="position:absolute;left:907.3px;top:740px;width:28px;height:28px;border-radius:50%;background:#598bdb;box-shadow:0 0 0 1.3px #ececec;color:#fff;font-size:14px;font-weight:400;line-height:28px;text-align:center;-webkit-text-stroke:0.3px #fff">SD</div><div class="date" style="top:734px">06/08/2025</div><div class="p0" style="top:734px">0</div><div class="track" style="top:750px"></div><div class="fill" style="top:750px;width:68.0px"></div><div class="thumb" style="top:747.5px;left:1215.5px"></div><div class="pv" style="top:734px">50</div><div class="badge" style="top:743px;background:#385f8f">In Progress</div><div class="rowbg" style="top:774px"></div><div class="num" style="top:774px">3</div><div class="task" style="top:774px;letter-spacing:0.075px">Prepare Required Compliance Documents</div><svg style="position:absolute;left:731px;top:784.5px" width="15" height="16" viewBox="0 0 15 16" fill="none" stroke="#444" stroke-width="1.3" stroke-linecap="round"><path d="M4.2 2.1H3Q0.7 2.1 0.7 4.4V12.9Q0.7 15.2 3 15.2H11.9Q14.2 15.2 14.2 12.9V4.4Q14.2 2.1 11.9 2.1H10.8"/><rect x="4.2" y="0.65" width="6.6" height="3" rx="1"/><path d="M3.7 7.5H4.2M6.8 7.5H10.9M3.7 11H4.2M6.8 11H9.7"/></svg><div class="ra" style="top:774px">0/4</div><div style="position:absolute;left:889.0px;top:780px;width:28px;height:28px;border-radius:50%;background:#598bdb;box-shadow:0 0 0 1.3px #ececec;color:#fff;font-size:14px;font-weight:400;line-height:28px;text-align:center;-webkit-text-stroke:0.3px #fff">SD</div><div class="date" style="top:774px">14/08/2025</div><div class="p0" style="top:774px">0</div><div class="track" style="top:790px"></div><div class="thumb" style="top:787.5px;left:1152.5px"></div><div class="pv" style="top:774px">0</div><div class="badge" style="top:783px;background:#d0271d">Not Started</div><div class="rowbg" style="top:814px"></div><div class="num" style="top:814px">4</div><div class="task" style="top:814px;letter-spacing:0.045px">Prepare Required Service Delivery Plans</div><svg style="position:absolute;left:731px;top:824.5px" width="15" height="16" viewBox="0 0 15 16" fill="none" stroke="#444" stroke-width="1.3" stroke-linecap="round"><path d="M4.2 2.1H3Q0.7 2.1 0.7 4.4V12.9Q0.7 15.2 3 15.2H11.9Q14.2 15.2 14.2 12.9V4.4Q14.2 2.1 11.9 2.1H10.8"/><rect x="4.2" y="0.65" width="6.6" height="3" rx="1"/><path d="M3.7 7.5H4.2M6.8 7.5H10.9M3.7 11H4.2M6.8 11H9.7"/></svg><div class="ra" style="top:814px">0/3</div><div style="position:absolute;left:889.0px;top:820px;width:28px;height:28px;border-radius:50%;background:#598bdb;box-shadow:0 0 0 1.3px #ececec;color:#fff;font-size:14px;font-weight:400;line-height:28px;text-align:center;-webkit-text-stroke:0.3px #fff">SD</div><div class="date" style="top:814px">21/08/2025</div><div class="p0" style="top:814px">0</div><div class="track" style="top:830px"></div><div class="thumb" style="top:827.5px;left:1152.5px"></div><div class="pv" style="top:814px">0</div><div class="badge" style="top:823px;background:#d0271d">Not Started</div><div class="rowbg" style="top:854px"></div><div class="num" style="top:854px">5</div><div class="task" style="top:854px;letter-spacing:0.12px">Prepare Required Workforce Documents</div><svg style="position:absolute;left:731px;top:864.5px" width="15" height="16" viewBox="0 0 15 16" fill="none" stroke="#444" stroke-width="1.3" stroke-linecap="round"><path d="M4.2 2.1H3Q0.7 2.1 0.7 4.4V12.9Q0.7 15.2 3 15.2H11.9Q14.2 15.2 14.2 12.9V4.4Q14.2 2.1 11.9 2.1H10.8"/><rect x="4.2" y="0.65" width="6.6" height="3" rx="1"/><path d="M3.7 7.5H4.2M6.8 7.5H10.9M3.7 11H4.2M6.8 11H9.7"/></svg><div class="ra" style="top:854px">3/3</div><svg style="position:absolute;left:888.0px;top:859px" width="30" height="30" viewBox="0 0 30 30"><defs><clipPath id="cpm889.0_860"><circle cx="15" cy="15" r="14"/></clipPath></defs><circle cx="15" cy="15" r="14.2" fill="#fff" stroke="#e8e8e8" stroke-width="1.5"/><g clip-path="url(#cpm889.0_860)"><path d="M5 30Q6 24.5 14 23.5Q22 24.5 23 30Z" fill="#eef0fa" stroke="#c8cce8" stroke-width="0.6"/><path d="M12.3 25L14.2 29L16.2 25Z" fill="#4a3aa0"/><path d="M8 8Q7.6 19 10 22.5Q12 25.5 14.2 25.5Q16.8 25.5 18.5 22Q20 18.5 19.8 8Z" fill="#c99f7c"/><path d="M9.5 16.5Q11 15.5 12.5 16.5M15.5 16.5Q17 15.5 18.5 16.5" stroke="#5a3a2a" stroke-width="0.8" fill="none"/><path d="M11.5 21.5Q14 22.8 16.5 21.5" stroke="#8a5a40" stroke-width="0.7" fill="none"/><path d="M7 14Q6 8.5 8.5 5Q11 2 15.5 2.3Q20 2.6 21 6.5Q21.5 9 20 12Q19.5 9 18 8.3Q13 9 10 8.2Q8.6 10 8.6 14.5Z" fill="#161616"/></g></svg><div class="date" style="top:854px">30/08/2025</div><div class="p0" style="top:854px">0</div><div class="track" style="top:870px"></div><div class="thumb" style="top:867.5px;left:1152.5px"></div><div class="pv" style="top:854px">0</div><div class="badge" style="top:863px;background:#d0271d">Not Started</div><div class="rowbg" style="top:894px"></div><div class="num" style="top:894px">6</div><div class="task" style="top:894px;letter-spacing:0.04px">Prepare Required Fit and Proper Person Declarations</div><svg style="position:absolute;left:731px;top:904.5px" width="15" height="16" viewBox="0 0 15 16" fill="none" stroke="#444" stroke-width="1.3" stroke-linecap="round"><path d="M4.2 2.1H3Q0.7 2.1 0.7 4.4V12.9Q0.7 15.2 3 15.2H11.9Q14.2 15.2 14.2 12.9V4.4Q14.2 2.1 11.9 2.1H10.8"/><rect x="4.2" y="0.65" width="6.6" height="3" rx="1"/><path d="M3.7 7.5H4.2M6.8 7.5H10.9M3.7 11H4.2M6.8 11H9.7"/></svg><div class="ra" style="top:894px">0/2</div><div style="position:absolute;left:889.0px;top:900px;width:28px;height:28px;border-radius:50%;background:#598bdb;box-shadow:0 0 0 1.3px #ececec;color:#fff;font-size:14px;font-weight:400;line-height:28px;text-align:center;-webkit-text-stroke:0.3px #fff">SD</div><svg style="position:absolute;left:906.3px;top:899px" width="30" height="30" viewBox="0 0 30 30"><circle cx="15" cy="15" r="14.2" fill="#fff" stroke="#e8e8e8" stroke-width="1.5"/><path d="M11.5 13.3Q14 8.6 18.8 8.7Q23.4 9 24.6 14Q27.6 15.3 27.5 18Q27.2 21 24.5 21H18.5" fill="none" stroke="#5b93e0" stroke-width="1.1"/><text x="3" y="21.4" font-family="Liberation Sans" font-weight="700" font-size="11" fill="#d01c1c" stroke="#d01c1c" stroke-width="0.45" textLength="14.5" lengthAdjust="spacingAndGlyphs">ISO</text><path d="M18.3 16.9H23M20.65 14.5V19.3" stroke="#111" stroke-width="1.3"/></svg><div class="date" style="top:894px">09/09/2025</div><div class="p0" style="top:894px">0</div><div class="track" style="top:910px"></div><div class="thumb" style="top:907.5px;left:1152.5px"></div><div class="pv" style="top:894px">0</div><div class="badge" style="top:903px;background:#d0271d">Not Started</div><div class="rowbg" style="top:934px"></div><div class="num" style="top:934px">7</div><div class="task" style="top:934px;letter-spacing:0.21px">Obtain Necessary Licenses and Certifications</div><svg style="position:absolute;left:731px;top:944.5px" width="15" height="16" viewBox="0 0 15 16" fill="none" stroke="#444" stroke-width="1.3" stroke-linecap="round"><path d="M4.2 2.1H3Q0.7 2.1 0.7 4.4V12.9Q0.7 15.2 3 15.2H11.9Q14.2 15.2 14.2 12.9V4.4Q14.2 2.1 11.9 2.1H10.8"/><rect x="4.2" y="0.65" width="6.6" height="3" rx="1"/><path d="M3.7 7.5H4.2M6.8 7.5H10.9M3.7 11H4.2M6.8 11H9.7"/></svg><div class="ra" style="top:934px">0/6</div><svg style="position:absolute;left:888.0px;top:939px" width="30" height="30" viewBox="0 0 30 30"><circle cx="15" cy="15" r="14.2" fill="#fff" stroke="#e8e8e8" stroke-width="1.5"/><path d="M11.5 13.3Q14 8.6 18.8 8.7Q23.4 9 24.6 14Q27.6 15.3 27.5 18Q27.2 21 24.5 21H18.5" fill="none" stroke="#5b93e0" stroke-width="1.1"/><text x="3" y="21.4" font-family="Liberation Sans" font-weight="700" font-size="11" fill="#d01c1c" stroke="#d01c1c" stroke-width="0.45" textLength="14.5" lengthAdjust="spacingAndGlyphs">ISO</text><path d="M18.3 16.9H23M20.65 14.5V19.3" stroke="#111" stroke-width="1.3"/></svg><div class="date" style="top:934px">16/09/2025</div><div class="p0" style="top:934px">0</div><div class="track" style="top:950px"></div><div class="thumb" style="top:947.5px;left:1152.5px"></div><div class="pv" style="top:934px">0</div><div class="badge" style="top:943px;background:#d0271d">Not Started</div><div class="addrow" style="top:974px"><svg style="position:absolute;left:15px;top:12.5px" width="12" height="12" viewBox="0 0 12 12" stroke="#8ab4f8" stroke-width="1.3"><path d="M6 0.5V11.5M0.5 6H11.5"/></svg><span class="addtxt">Add a New Item</span></div><div class="avg"><span style="color:#a6a4b6">Average:</span><span style="position:absolute;left:63.5px;color:#62607e;-webkit-text-stroke:0.1px #62607e;letter-spacing:-0.6px;font-size:13.8px">10.71</span></div><div class="ghdr" style="top:1088px;border-radius:4px 0 0 0"></div><svg style="position:absolute;left:54px;top:1101.5px" width="16" height="12" viewBox="0 0 16 12" fill="none" stroke="#2a2a2a" stroke-width="2" stroke-linecap="round" stroke-linejoin="round"><path d="M2.3 3.2L8 8.8L13.7 3.2"/></svg><div class="pill" style="top:1098px;width:273px;background:#ecd0b4"><svg width="11" height="13" viewBox="0 0 11 13" style="position:absolute;left:10px;top:5px"><rect x="0.5" y="1.5" width="10" height="11" rx="1" fill="#d9a060"/><rect x="1.8" y="2.8" width="7.4" height="8.5" fill="#f3eef6"/><rect x="3.5" y="0.5" width="4" height="2.5" rx="0.7" fill="#9a8aa8"/><path d="M3 5.5H8M3 7.5H8M3 9.5H6.5" stroke="#b8a8c8" stroke-width="0.6"/></svg><span>Compliance and Assessment Preparation</span></div><div class="count" style="top:1095px;left:378px">4</div><div class="colhdr" style="top:1131px;height:42px"></div><svg style="position:absolute;left:95px;top:1142.5px" width="16" height="16" viewBox="0 0 16 16" fill="none" stroke="#333" stroke-width="1.2" stroke-linecap="round" stroke-linejoin="round"><path d="M3.2 11.4L2.9 9.2Q2.8 8.6 3.3 8.1L9.6 1.9Q10.2 1.3 10.8 1.9L12.6 3.7Q13.2 4.3 12.6 4.9L6.3 11.1Q5.8 11.6 5.2 11.6Z"/><path d="M1.3 14.5H14.8"/></svg><div class="hl" style="top:1131.5px;left:113px">Project Task</div><svg style="position:absolute;left:193px;top:1141.5px" width="10" height="10" viewBox="0 0 10 10"><path d="M5 0.3L6.4 3.3L9.7 3.6L7.2 5.8L7.9 9.2L5 7.5L2.1 9.2L2.8 5.8L0.3 3.6L3.6 3.3Z" fill="#f2c200" stroke="#f2c200" stroke-width="0.6" stroke-linejoin="round"/></svg><svg style="position:absolute;left:735px;top:1143.5px" width="14" height="15" viewBox="0 0 15 16" fill="none" stroke="#444" stroke-width="1.3" stroke-linecap="round"><path d="M4.2 2.1H3Q0.7 2.1 0.7 4.4V12.9Q0.7 15.2 3 15.2H11.9Q14.2 15.2 14.2 12.9V4.4Q14.2 2.1 11.9 2.1H10.8"/><rect x="4.2" y="0.65" width="6.6" height="3" rx="1"/><path d="M3.7 7.5H4.2M6.8 7.5H10.9M3.7 11H4.2M6.8 11H9.7"/></svg><div class="hl" style="top:1131.5px;left:752px">Required Actions</div><svg style="position:absolute;left:887px;top:1143.5px" width="16" height="16" viewBox="0 0 16 16" fill="none" stroke="#333" stroke-width="1.3"><circle cx="6.6" cy="3.6" r="2.9"/><path d="M9.7 0.8A2.9 2.9 0 0 1 9.7 6.4"/><path d="M1.15 13.6V11Q1.15 9.6 2.6 9.6H8.9Q10.35 9.6 10.35 11V13.6"/><path d="M12.2 9.7Q13.85 10 13.85 11.5V13.6"/></svg><div class="hl" style="top:1131.5px;left:905px">Responsible(s)</div><svg style="position:absolute;left:1032.5px;top:1142.5px" width="16" height="16" viewBox="0 0 16 16" fill="none" stroke="#333" stroke-width="1.3" stroke-linecap="round"><rect x="1.45" y="1.65" width="12.4" height="12.5" rx="2.3"/><path d="M1.45 4.5H13.85"/><path d="M4.1 7.7H4.2M7.4 7.7H7.5M10.5 7.7H10.6M4.1 10.5H4.2M7.4 10.5H7.5" stroke-width="1.5"/></svg><div class="hl" style="top:1131.5px;left:1050px">Due Date</div><svg style="position:absolute;left:1142px;top:1143.5px" width="16" height="16" viewBox="0 0 16 16" fill="none" stroke="#222"><path d="M1 6.9H14.8" stroke-width="1.8" stroke-linecap="round"/><ellipse cx="9" cy="6.9" rx="2.3" ry="3.4" fill="#ededed" stroke-width="1.2"/></svg><div class="hl" style="top:1131.5px;left:1160px">Progress%</div><svg style="position:absolute;left:1342px;top:1143.5px" width="16" height="16" viewBox="0 0 16 16" fill="none" stroke="#333" stroke-width="1.2" stroke-linejoin="round"><path d="M1.3 1.1H7.9L14 7.1L7.9 13.2L1.3 6.6Z"/><circle cx="5.8" cy="5" r="0.7" fill="#333"/></svg><div class="hl" style="top:1131.5px;left:1360px">Status</div><svg style="position:absolute;left:1472px;top:1145.5px" width="12" height="12" viewBox="0 0 12 12" stroke="#8ab4f8" stroke-width="1.3"><path d="M6 0.5V11.5M0.5 6H11.5"/></svg><div class="addcol" style="top:1131.5px">Add a Column</div><div class="rowbg" style="top:1173px"></div><div class="num" style="top:1173px">1</div><div class="task" style="top:1173px;letter-spacing:0.26px">Conduct Internal Audit</div><svg style="position:absolute;left:731px;top:1183.5px" width="15" height="16" viewBox="0 0 15 16" fill="none" stroke="#444" stroke-width="1.3" stroke-linecap="round"><path d="M4.2 2.1H3Q0.7 2.1 0.7 4.4V12.9Q0.7 15.2 3 15.2H11.9Q14.2 15.2 14.2 12.9V4.4Q14.2 2.1 11.9 2.1H10.8"/><rect x="4.2" y="0.65" width="6.6" height="3" rx="1"/><path d="M3.7 7.5H4.2M6.8 7.5H10.9M3.7 11H4.2M6.8 11H9.7"/></svg><div class="ra" style="top:1173px">0/3</div><svg style="position:absolute;left:888.0px;top:1178px" width="30" height="30" viewBox="0 0 30 30"><defs><clipPath id="cpm889.0_1179"><circle cx="15" cy="15" r="14"/></clipPath></defs><circle cx="15" cy="15" r="14.2" fill="#fff" stroke="#e8e8e8" stroke-width="1.5"/><g clip-path="url(#cpm889.0_1179)"><path d="M5 30Q6 24.5 14 23.5Q22 24.5 23 30Z" fill="#eef0fa" stroke="#c8cce8" stroke-width="0.6"/><path d="M12.3 25L14.2 29L16.2 25Z" fill="#4a3aa0"/><path d="M8 8Q7.6 19 10 22.5Q12 25.5 14.2 25.5Q16.8 25.5 18.5 22Q20 18.5 19.8 8Z" fill="#c99f7c"/><path d="M9.5 16.5Q11 15.5 12.5 16.5M15.5 16.5Q17 15.5 18.5 16.5" stroke="#5a3a2a" stroke-width="0.8" fill="none"/><path d="M11.5 21.5Q14 22.8 16.5 21.5" stroke="#8a5a40" stroke-width="0.7" fill="none"/><path d="M7 14Q6 8.5 8.5 5Q11 2 15.5 2.3Q20 2.6 21 6.5Q21.5 9 20 12Q19.5 9 18 8.3Q13 9 10 8.2Q8.6 10 8.6 14.5Z" fill="#161616"/></g></svg><div class="date" style="top:1173px">10/09/2025</div><div class="p0" style="top:1173px">0</div><div class="track" style="top:1189px"></div><div class="thumb" style="top:1186.5px;left:1152.5px"></div><div class="pv" style="top:1173px">0</div><div class="badge" style="top:1182px;background:#d0271d">Not Started</div><div class="rowbg" style="top:1213px"></div><div class="num" style="top:1213px">2</div><div class="task" style="top:1213px;letter-spacing:0.13px">Engage with the Single Assessment System</div><svg style="position:absolute;left:731px;top:1223.5px" width="15" height="16" viewBox="0 0 15 16" fill="none" stroke="#444" stroke-width="1.3" stroke-linecap="round"><path d="M4.2 2.1H3Q0.7 2.1 0.7 4.4V12.9Q0.7 15.2 3 15.2H11.9Q14.2 15.2 14.2 12.9V4.4Q14.2 2.1 11.9 2.1H10.8"/><rect x="4.2" y="0.65" width="6.6" height="3" rx="1"/><path d="M3.7 7.5H4.2M6.8 7.5H10.9M3.7 11H4.2M6.8 11H9.7"/></svg><div class="ra" style="top:1213px">0/2</div><div style="position:absolute;left:889.0px;top:1219px;width:28px;height:28px;border-radius:50%;background:#598bdb;box-shadow:0 0 0 1.3px #ececec;color:#fff;font-size:14px;font-weight:400;line-height:28px;text-align:center;-webkit-text-stroke:0.3px #fff">SD</div><div class="date" style="top:1213px">18/09/2025</div><div class="p0" style="top:1213px">0</div><div class="track" style="top:1229px"></div><div class="thumb" style="top:1226.5px;left:1152.5px"></div><div class="pv" style="top:1213px">0</div><div class="badge" style="top:1222px;background:#d0271d">Not Started</div><svg style="position:absolute;left:0;top:0" width="40" height="1250" fill="#222"><circle cx="23.2" cy="345.60" r="1.2"/><circle cx="27.8" cy="345.60" r="1.2"/><circle cx="23.2" cy="351.50" r="1.2"/><circle cx="27.8" cy="351.50" r="1.2"/><circle cx="23.2" cy="357.40" r="1.2"/><circle cx="27.8" cy="357.40" r="1.2"/><circle cx="23.2" cy="385.60" r="1.2"/><circle cx="27.8" cy="385.60" r="1.2"/><circle cx="23.2" cy="391.50" r="1.2"/><circle cx="27.8" cy="391.50" r="1.2"/><circle cx="23.2" cy="397.40" r="1.2"/><circle cx="27.8" cy="397.40" r="1.2"/><circle cx="23.2" cy="425.60" r="1.2"/><circle cx="27.8" cy="425.60" r="1.2"/><circle cx="23.2" cy="431.50" r="1.2"/><circle cx="27.8" cy="431.50" r="1.2"/><circle cx="23.2" cy="437.40" r="1.2"/><circle cx="27.8" cy="437.40" r="1.2"/><circle cx="23.2" cy="465.60" r="1.2"/><circle cx="27.8" cy="465.60" r="1.2"/><circle cx="23.2" cy="471.50" r="1.2"/><circle cx="27.8" cy="471.50" r="1.2"/><circle cx="23.2" cy="477.40" r="1.2"/><circle cx="27.8" cy="477.40" r="1.2"/><circle cx="23.2" cy="705.60" r="1.2"/><circle cx="27.8" cy="705.60" r="1.2"/><circle cx="23.2" cy="711.50" r="1.2"/><circle cx="27.8" cy="711.50" r="1.2"/><circle cx="23.2" cy="717.40" r="1.2"/><circle cx="27.8" cy="717.40" r="1.2"/><circle cx="23.2" cy="745.60" r="1.2"/><circle cx="27.8" cy="745.60" r="1.2"/><circle cx="23.2" cy="751.50" r="1.2"/><circle cx="27.8" cy="751.50" r="1.2"/><circle cx="23.2" cy="757.40" r="1.2"/><circle cx="27.8" cy="757.40" r="1.2"/><circle cx="23.2" cy="785.60" r="1.2"/><circle cx="27.8" cy="785.60" r="1.2"/><circle cx="23.2" cy="791.50" r="1.2"/><circle cx="27.8" cy="791.50" r="1.2"/><circle cx="23.2" cy="797.40" r="1.2"/><circle cx="27.8" cy="797.40" r="1.2"/><circle cx="23.2" cy="825.60" r="1.2"/><circle cx="27.8" cy="825.60" r="1.2"/><circle cx="23.2" cy="831.50" r="1.2"/><circle cx="27.8" cy="831.50" r="1.2"/><circle cx="23.2" cy="837.40" r="1.2"/><circle cx="27.8" cy="837.40" r="1.2"/><circle cx="23.2" cy="865.60" r="1.2"/><circle cx="27.8" cy="865.60" r="1.2"/><circle cx="23.2" cy="871.50" r="1.2"/><circle cx="27.8" cy="871.50" r="1.2"/><circle cx="23.2" cy="877.40" r="1.2"/><circle cx="27.8" cy="877.40" r="1.2"/><circle cx="23.2" cy="905.60" r="1.2"/><circle cx="27.8" cy="905.60" r="1.2"/><circle cx="23.2" cy="911.50" r="1.2"/><circle cx="27.8" cy="911.50" r="1.2"/><circle cx="23.2" cy="917.40" r="1.2"/><circle cx="27.8" cy="917.40" r="1.2"/><circle cx="23.2" cy="945.60" r="1.2"/><circle cx="27.8" cy="945.60" r="1.2"/><circle cx="23.2" cy="951.50" r="1.2"/><circle cx="27.8" cy="951.50" r="1.2"/><circle cx="23.2" cy="957.40" r="1.2"/><circle cx="27.8" cy="957.40" r="1.2"/><circle cx="23.2" cy="1184.60" r="1.2"/><circle cx="27.8" cy="1184.60" r="1.2"/><circle cx="23.2" cy="1190.50" r="1.2"/><circle cx="27.8" cy="1190.50" r="1.2"/><circle cx="23.2" cy="1196.40" r="1.2"/><circle cx="27.8" cy="1196.40" r="1.2"/><circle cx="23.2" cy="1224.60" r="1.2"/><circle cx="27.8" cy="1224.60" r="1.2"/><circle cx="23.2" cy="1230.50" r="1.2"/><circle cx="27.8" cy="1230.50" r="1.2"/><circle cx="23.2" cy="1236.40" r="1.2"/><circle cx="27.8" cy="1236.40" r="1.2"/></svg><div id="popup"></div><div id="popinput"></div><div class="cb on" style="top:565.5px"><svg width="17" height="17" viewBox="0 0 17 17" fill="none" stroke="#fff" stroke-width="2" stroke-linecap="round" stroke-linejoin="round"><path d="M4.5 8.8L7.3 11.3L12.5 6"/></svg></div><div class="pit strike" style="top:563.5px;letter-spacing:0px">Train staff on the Strengthened Quality Standards and Code of Conduct</div><div class="cb on" style="top:597.5px"><svg width="17" height="17" viewBox="0 0 17 17" fill="none" stroke="#fff" stroke-width="2" stroke-linecap="round" stroke-linejoin="round"><path d="M4.5 8.8L7.3 11.3L12.5 6"/></svg></div><div class="pit strike" style="top:595.5px;letter-spacing:0.05px">Seek clarification from the consultant if any questions arise</div><div class="cb" style="top:629.5px"></div><div class="pit" style="top:627.5px;letter-spacing:0px">For clinical services, ensure nurses and allied health professionals are trained in clinical governance and evidence-based practice</div><div class="cb" style="top:661.5px"></div><div class="pit" style="top:659.5px;letter-spacing:0.09px">Utilise government-funded workforce training programs to upskill staff and address shortages</div><div class="cb" style="top:693.5px"></div><div class="pit" style="top:691.5px;letter-spacing:0px">Share the Workforce Handbook with them and ensure they read and acknowledge that</div><div id="greenline"></div><div id="bottomstrip"></div>
</body></html>
